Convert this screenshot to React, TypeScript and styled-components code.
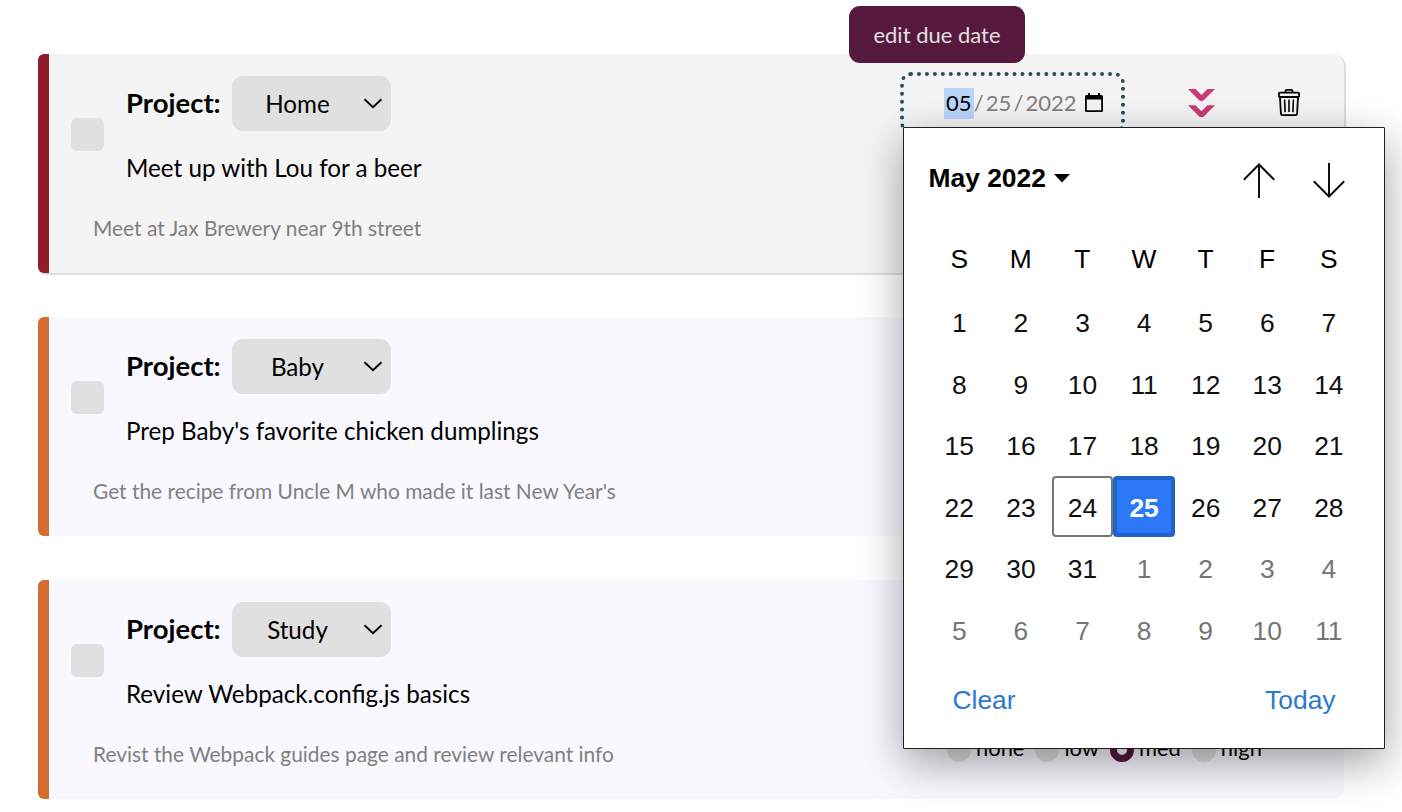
import React from "react";
import styled, { createGlobalStyle, css } from "styled-components";

const GlobalStyle = createGlobalStyle`
  * { box-sizing: border-box; }
  html, body { margin: 0; padding: 0; background: #fff; overflow: hidden; }
  body { font-family: Lato, sans-serif; color: #000; }
  button { font: inherit; color: inherit; border: 0; background: none; padding: 0; }
`;

const Page = styled.main`
  position: relative;
  width: 1402px;
  height: 812px;
  overflow: hidden;
  padding: 54px 57px 0 38px;
`;

const TaskList = styled.div`
  display: flex;
  flex-direction: column;
  gap: 44px;
`;

const Card = styled.article<{ $accent: string; $active?: boolean }>`
  display: flex;
  flex-direction: column;
  height: 219px;
  flex: none;
  width: 1306px;
  padding: 22px 0 0 22px;
  border-left: 11px solid ${(p) => p.$accent};
  border-radius: 6px 12px 12px 6px;
  background: ${(p) => (p.$active ? "#f4f4f4" : "#f9f8ff")};
  ${(p) => p.$active && css`box-shadow: 1.5px 1.5px 1px #dcdcdc;`}
`;

const TopRow = styled.div`
  display: flex;
  height: 115px;
`;

const Checkbox = styled.span`
  width: 33px;
  height: 33px;
  margin: 42px 22px 0 0;
  border-radius: 6px;
  background: #e0e0e0;
`;

const Summary = styled.div`
  display: flex;
  flex-direction: column;
  width: 774px;
`;

const ProjectRow = styled.div`
  display: flex;
  align-items: center;
  height: 55px;
`;

const ProjectLabel = styled.span`
  width: 106px;
  margin-top: -2px;
  font-size: 27.5px;
  font-weight: 700;
  line-height: 32px;
  white-space: nowrap;
`;

const Select = styled.button`
  display: flex;
  align-items: center;
  width: 159px;
  height: 55px;
  padding: 0 8px 1px 0;
  border-radius: 11px;
  background: #e0e0e0;
  font-size: 24.2px;
`;

const SelectValue = styled.span`
  flex: 1;
  text-align: center;
`;

const Title = styled.h2`
  margin: 19px 0 0;
  font-size: 24.2px;
  font-weight: 400;
  line-height: 36px;
  white-space: nowrap;
`;

const BottomRow = styled.div`
  display: flex;
  align-items: flex-start;
  height: 36px;
  margin-top: 19px;
  margin-left: 22px;
`;

const Notes = styled.p`
  margin: 3px 0 0;
  width: 854px;
  font-size: 20.9px;
  line-height: 30px;
  color: #808080;
  white-space: nowrap;
`;

const Actions = styled.div`
  display: flex;
  align-items: flex-start;
`;

const DateField = styled.div`
  display: flex;
  align-items: center;
  width: 225px;
  height: 62px;
  margin-top: -4px;
  padding-left: 40px;
  border: 4px dotted #264e60;
  border-radius: 11px;
  font-size: 22px;
  color: #808080;
`;

const DateSegment = styled.span<{ $selected?: boolean }>`
  height: 31px;
  padding: 0 2.1px;
  line-height: 30px;
  color: ${(p) => (p.$selected ? "#000" : "inherit")};
  background: ${(p) => (p.$selected ? "#b9d5fb" : "transparent")};
`;

const DateSlash = styled.span`
  line-height: 30px;
`;

const CalendarIcon = styled.svg`
  margin-left: 6.5px;
  margin-top: -1px;
`;

const PriorityButton = styled.button`
  display: flex;
  margin: 12px 0 0 63px;
`;

const TrashButton = styled.button`
  display: flex;
  margin: 12px 0 0 62px;
`;

const Priorities = styled.div`
  display: flex;
  gap: 11px;
`;

const Priority = styled.span`
  display: flex;
  align-items: flex-start;
  gap: 5px;
  height: 24px;
  margin-top: 2px;
  font-size: 21.9px;
  line-height: 19px;
`;

const Radio = styled.span<{ $checked?: boolean }>`
  width: 24px;
  height: 24px;
  border-radius: 50%;
  background: ${(p) => (p.$checked ? "#fff" : "#e0e0e0")};
  border: ${(p) => (p.$checked ? "7.5px solid #57183e" : "0")};
`;

const Tooltip = styled.div`
  position: absolute;
  left: 849px;
  top: 6px;
  width: 176px;
  height: 57px;
  border-radius: 11px;
  background: #57183e;
  color: #e0e0e0;
  font-size: 22px;
  line-height: 58px;
  text-align: center;
  white-space: nowrap;
`;

const Popup = styled.div`
  position: absolute;
  left: 903px;
  top: 127px;
  width: 482px;
  height: 622px;
  padding: 0 24.500px;
  border: 1px solid #202020;
  border-radius: 1px;
  background: #fff;
  box-shadow: 0 14px 44px rgba(0, 0, 0, 0.37);
  font-family: "Liberation Sans", Arial, sans-serif;
  font-size: 26.4px;
`;

const PopupHeader = styled.header`
  display: flex;
  align-items: center;
  height: 100px;
`;

const MonthButton = styled.button`
  display: flex;
  align-items: center;
  gap: 8px;
  font-weight: 700;
  white-space: nowrap;
`;

const Arrows = styled.div`
  display: flex;
  gap: 38px;
  margin: 6px 15px 0 auto;
`;

const Weekdays = styled.div`
  display: grid;
  grid-template-columns: repeat(7, 1fr);
  height: 63px;
  line-height: 63px;
  text-align: center;
`;

const Days = styled.div`
  display: grid;
  grid-template-columns: repeat(7, 61.600px);
  grid-auto-rows: 61.6px;
  text-align: center;
  line-height: 65px;
`;

const Day = styled.span<{ $muted?: boolean; $today?: boolean; $selected?: boolean }>`
  color: ${(p) => (p.$muted ? "#757575" : "#101010")};
  border-radius: 4px;
  ${(p) => p.$today && css`
    border: 2px solid #767676;
    line-height: 61px;
  `}
  ${(p) => p.$selected && css`
    border: 4px solid #2161c8;
    background: #2d78f6;
    color: #fff;
    font-weight: 700;
    line-height: 57px;
  `}
`;

const PopupFooter = styled.footer`
  display: flex;
  justify-content: space-between;
  margin-top: 24px;
  padding: 0 24px;
  color: #2a78d0;
`;

const ChevronDown = () => (
  <svg width="20" height="14" viewBox="0 0 20 14" fill="none">
    <path d="M1.500 3.200 10 11.300l8.500-8.100" stroke="#000" strokeWidth="1.9" />
  </svg>
);

const DoubleChevron = () => (
  <svg width="27" height="30" viewBox="0 0 27 30" fill="#c93a76">
    <path d="M0 1h7.500l6 6 6-6H27L15.800 12.200q-2.300 1.600-4.600 0Z" />
    <path d="M0 17.300h7.500l6 6 6-6H27L15.800 28.500q-2.300 1.600-4.600 0Z" />
  </svg>
);

const Trash = () => (
  <svg width="24" height="30" viewBox="0 0 24 30" fill="none" stroke="#000" strokeWidth="1.8">
    <path d="M8.500 4.500V3q0-1.200 1.200-1.200h4.600q1.200 0 1.200 1.200v1.500" />
    <rect x="1.900" y="4.700" width="20.200" height="4.300" rx="1" />
    <path d="M3 9.500l.9 15.900q.1 1.700 1.700 1.700h12.800q1.600 0 1.700-1.700L21 9.500" />
    <path d="M7.600 11.500l.5 12.600M12 11.500v12.600M16.400 11.500l-.5 12.600" strokeWidth="1.600" />
  </svg>
);

const Arrow = ({ down }: { down?: boolean }) => (
  <svg width="32" height="36" viewBox="0 0 32 36" fill="none" stroke="#101010" strokeWidth="2">
    {down ? <path d="M16 0v34M.8 18.300 16 33.500 31.200 18.300" /> : <path d="M16 35V1M.8 16.700 16 1.500 31.200 16.700" />}
  </svg>
);

interface Task {
  project: string;
  title: string;
  notes: string;
  accent: string;
  priority?: string;
  due?: string[];
}

const tasks: Task[] = [
  {
    project: "Home",
    title: "Meet up with Lou for a beer",
    notes: "Meet at Jax Brewery near 9th street",
    accent: "#8f1d27",
    due: ["05", "25", "2022"],
  },
  {
    project: "Baby",
    title: "Prep Baby's favorite chicken dumplings",
    notes: "Get the recipe from Uncle M who made it last New Year's",
    accent: "#d66d30",
  },
  {
    project: "Study",
    title: "Review Webpack.config.js basics",
    notes: "Revist the Webpack guides page and review relevant info",
    accent: "#d66d30",
    priority: "med",
  },
];

const priorities = ["none", "low", "med", "high"];
const weekdays = ["S", "M", "T", "W", "T", "F", "S"];
const days = Array.from({ length: 42 }, (_, i) => (i < 31 ? i + 1 : i - 30));

const TaskCard = ({ task }: { task: Task }) => (
  <Card $accent={task.accent} $active={!!task.due}>
    <TopRow>
      <Checkbox />
      <Summary>
        <ProjectRow>
          <ProjectLabel>Project:</ProjectLabel>
          <Select>
            <SelectValue>{task.project}</SelectValue>
            <ChevronDown />
          </Select>
        </ProjectRow>
        <Title>{task.title}</Title>
      </Summary>
      {task.due && (
        <Actions>
          <DateField>
            <DateSegment $selected>{task.due[0]}</DateSegment>
            <DateSlash>/</DateSlash>
            <DateSegment>{task.due[1]}</DateSegment>
            <DateSlash>/</DateSlash>
            <DateSegment>{task.due[2]}</DateSegment>
            <CalendarIcon width="18" height="20" viewBox="0 0 18 20">
              <path d="M3 0h2v2h8V0h2v2h1.500Q18 2 18 3.500v14q0 1.500-1.500 1.500h-15Q0 19 0 17.500v-14Q0 2 1.500 2H3Zm-1.200 6.500v10.700h14.400V6.500Z" fillRule="evenodd" />
            </CalendarIcon>
          </DateField>
          <PriorityButton><DoubleChevron /></PriorityButton>
          <TrashButton><Trash /></TrashButton>
        </Actions>
      )}
    </TopRow>
    <BottomRow>
      <Notes>{task.notes}</Notes>
      {task.priority && (
        <Priorities>
          {priorities.map((p) => (
            <Priority key={p}>
              <Radio $checked={p === task.priority} />
              {p}
            </Priority>
          ))}
        </Priorities>
      )}
    </BottomRow>
  </Card>
);

export default function App() {
  return (
    <Page>
      <GlobalStyle />
      <TaskList>
        {tasks.map((task) => (
          <TaskCard key={task.title} task={task} />
        ))}
      </TaskList>
      <Tooltip>edit due date</Tooltip>
      <Popup>
        <PopupHeader>
          <MonthButton>
            May 2022
            <svg width="16" height="9" viewBox="0 0 16 9"><path d="M0 0h16L8 8.500Z" /></svg>
          </MonthButton>
          <Arrows>
            <Arrow />
            <Arrow down />
          </Arrows>
        </PopupHeader>
        <Weekdays>
          {weekdays.map((d, i) => <span key={i}>{d}</span>)}
        </Weekdays>
        <Days>
          {days.map((d, i) => (
            <Day key={i} $muted={i > 30} $today={i === 23} $selected={i === 24}>{d}</Day>
          ))}
        </Days>
        <PopupFooter>
          <span>Clear</span>
          <span>Today</span>
        </PopupFooter>
      </Popup>
    </Page>
  );
}
